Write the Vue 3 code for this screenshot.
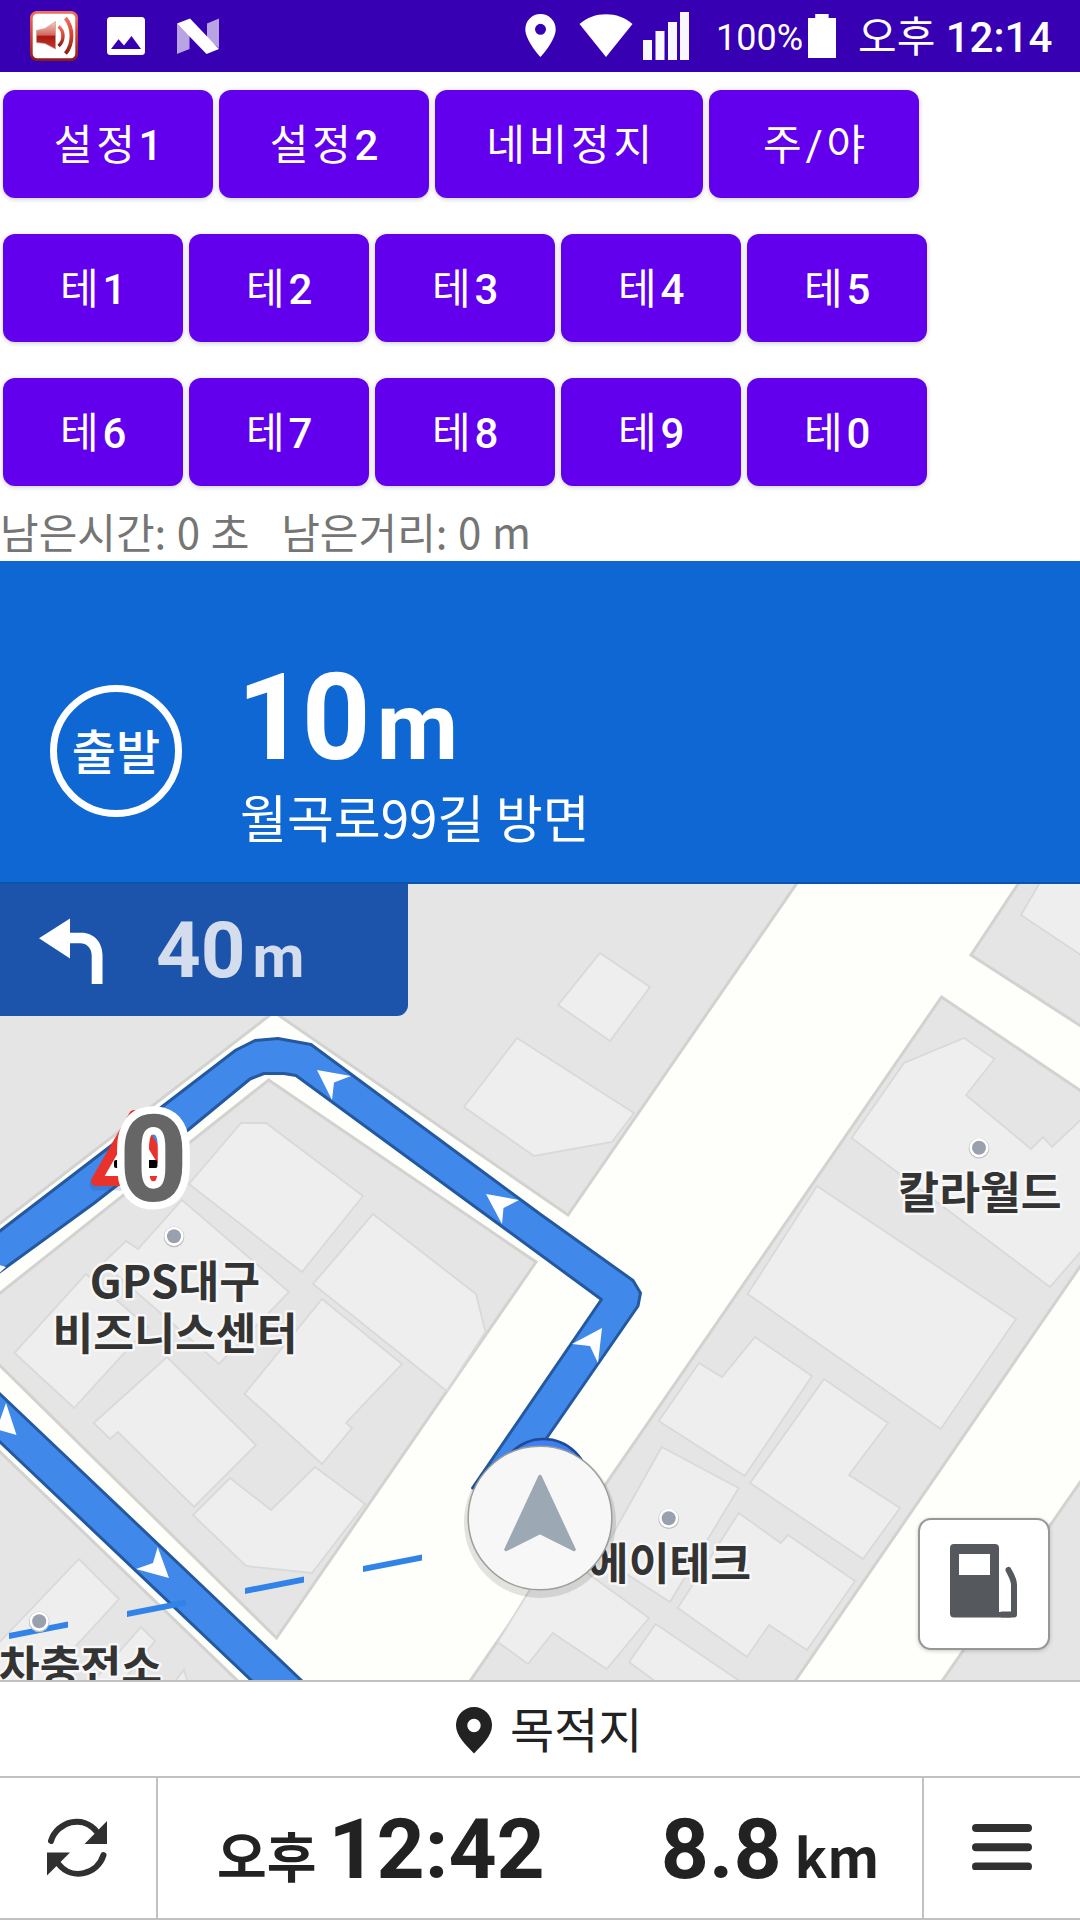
<script setup>
const rows = [
  [
    { ko: '설정', num: '1', w: 210 },
    { ko: '설정', num: '2', w: 210 },
    { ko: '네비정지', num: '', w: 268 },
    { ko: '주/야', num: '', w: 210 },
  ],
  ['1', '2', '3', '4', '5'].map((num) => ({ ko: '테', num, w: 180 })),
  ['6', '7', '8', '9', '0'].map((num) => ({ ko: '테', num, w: 180 })),
]

const remain = '남은시간: 0 초   남은거리: 0 m'

const blocks = [
  '-10,870 806,870 568,1215 274,1012 -10,1231',
  '268.6,1080 536,1262 276.5,1638 -20,1346 -20,1309',
  '-5,1447 241,1684 241,1700 -5,1700',
  '941.5,997 1090,1097 1090,1252 793,1684 468,1684',
  '1026,872 971,955 1090,1032 1090,872',
  '1090,1468 940,1684 1090,1684',
]

const buildings = [
  '600,953 650,987 610,1041 558,1005',
  '517,1038 634,1113 612,1142 534,1156 464,1107',
  '1046,872 1021,915 1090,961 1090,872',
  '964,1038 994.5,1059 966,1095 1031,1149 1043,1137 1052,1147 1090,1111 1090,1241 1050,1287 851.6,1138 904,1063',
  '817,1186 1016,1319 940.7,1429 747.6,1294',
  '699,1363 722,1377 755,1337 812,1376 744.7,1476 658.7,1421',
  '824,1379 888,1423 849,1475 900,1508 863,1559 750,1483',
  '661.7,1447 738.7,1488 670,1602 600,1557',
  '738.7,1513 780.7,1543 788,1535 855,1581 807,1650 769,1625 747,1657 677.7,1608',
  '553,1552 590,1575 649,1618 606.7,1669 552.7,1633 528,1664 497.7,1642',
  '655.7,1624 744,1684 659,1684 629,1662',
  '241,1123 266,1123 363,1196 302,1272 189,1184',
  '373,1214 476,1294 485.5,1332 446.6,1391 313,1284',
  '322,1299 402,1364 346,1423 352,1428 322,1464 244.5,1394',
  '182,1200 289,1292 219,1364 103,1263 126,1241 138,1249',
  '86,1274 148,1327 74,1408 14.5,1353',
  '167,1357 256,1445 194,1507 118,1432 110,1439 93.7,1423',
  '230,1478 271,1510 315,1467 365,1504 312,1573 246,1566 193,1515',
  '79,1559 119,1599 40,1685 -6,1685 -6,1648',
  '141,1627 155,1641 120,1685 90,1685',
  '184,1670 190,1690 168,1690',
]

const chevrons = [
  '317,1070 351,1076 334,1082.5 332,1100',
  '486,1194 519,1200 503.5,1208 502,1224',
  '602,1328 572,1344 590,1346 598,1363',
  '157.7,1547 153,1563 136,1569 169,1578',
  '6,1403 0,1420 -12,1427 16.5,1435',
  '-14,1261 6,1267 -4,1276',
]

const dashes = [
  [9, 1636],
  [127, 1614],
  [245, 1591],
  [363, 1569],
]

const pois = [
  [979, 1147.7],
  [174, 1236.3],
  [668.7, 1518.2],
  [39.2, 1621.3],
]
</script>

<template>
  <div class="screen">
    <header class="status">
      <svg class="i-speaker" width="48" height="50" viewBox="0 0 48 50">
        <defs>
          <linearGradient id="frame" x1="0" y1="0" x2="0" y2="1">
            <stop offset="0" stop-color="#f0705c" />
            <stop offset=".5" stop-color="#d2402f" />
            <stop offset="1" stop-color="#8c1d16" />
          </linearGradient>
          <linearGradient id="cone" x1="0" y1="0" x2="0" y2="1">
            <stop offset="0" stop-color="#f6cdc8" />
            <stop offset=".48" stop-color="#d5685f" />
            <stop offset=".55" stop-color="#a81812" />
            <stop offset="1" stop-color="#c8382c" />
          </linearGradient>
        </defs>
        <rect x="1.3" y="1.3" width="45.4" height="47.4" rx="6" fill="#fff" stroke="url(#frame)" stroke-width="2.8" />
        <path d="M6.5 19.5 15 17.5 25.5 10.5V38L15 32.5 6.5 31.5Z" fill="url(#cone)" stroke="#b98" stroke-width=".6" />
        <path d="M28.5 15.5C34.5 20 34.5 30 28.5 35" fill="none" stroke="url(#frame)" stroke-width="3.4" />
        <path d="M35.5 7C43.5 17 43.5 33 35.5 42.5" fill="none" stroke="url(#frame)" stroke-width="3.8" />
      </svg>
      <svg class="i-image" width="38" height="38" viewBox="0 0 38 38">
        <path fill="#fff" fill-rule="evenodd" d="M3.5 0h31A3.5 3.5 0 0 1 38 3.5v31a3.5 3.5 0 0 1-3.5 3.5h-31A3.5 3.5 0 0 1 0 34.5v-31A3.5 3.5 0 0 1 3.5 0ZM4 32h30L24.5 19 17 28.5 11.5 22.3Z" />
      </svg>
      <svg class="i-n" width="42" height="36" viewBox="0 0 42 36">
        <path fill="#b9a3e3" d="M0 5.5 12.5 18V31L0 36ZM30 5.5 42 .5V30L30 20Z" />
        <path fill="#fff" d="M0 5.5 13 .5 42 31 29.5 36Z" />
      </svg>
      <span class="grow"></span>
      <svg class="i-loc" width="31" height="43" viewBox="0 0 31 43">
        <path fill="#fff" fill-rule="evenodd" d="M15.5 0A15.2 15.2 0 0 0 .3 15.2C.3 26.5 15.5 43 15.5 43S30.7 26.5 30.7 15.2A15.2 15.2 0 0 0 15.5 0Zm0 20.8a5.5 5.5 0 1 1 0-11 5.5 5.5 0 0 1 0 11Z" />
      </svg>
      <svg class="i-wifi" width="54" height="43" viewBox="0 0 54 43">
        <path fill="#fff" d="M27 43 .5 10C8 3.5 17 .3 27 .3S46 3.5 53.5 10Z" />
      </svg>
      <svg class="i-signal" width="46" height="48" viewBox="0 0 46 48">
        <path fill="#fff" opacity=".97" d="M0 28h9v20H0zM12.5 19h9v29h-9zM25 10h9v38h-9zM37 0h9v48h-9z" />
      </svg>
      <span class="pct">100%</span>
      <svg class="i-batt" width="28" height="44" viewBox="0 0 28 44">
        <path fill="#fff" d="M7.2 0h13.4v4H28v40H0V4h7.2z" />
      </svg>
      <span class="clock">오후 <b>12:14</b></span>
    </header>

    <section class="controls">
      <div v-for="(row, r) in rows" :key="r" class="row">
        <button v-for="b in row" :key="b.ko + b.num" class="btn" :style="{ width: b.w + 'px' }">{{ b.ko }}<b v-if="b.num">{{ b.num }}</b></button>
      </div>
      <p class="remain">{{ remain }}</p>
    </section>

    <section class="guide">
      <div class="depart"><span>출발</span></div>
      <div class="guide-text">
        <div class="dist">10<span>m</span></div>
        <div class="toward">월곡로99길 방면</div>
      </div>
    </section>

    <section class="map">
      <svg class="canvas" width="1080" height="796" viewBox="0 884 1080 796">
        <rect y="884" width="1080" height="796" fill="#fefffa" />
        <polygon v-for="p in blocks" :key="p" :points="p" fill="#e5e5e5" stroke="#d2d2d0" stroke-width="3" />
        <polygon v-for="p in buildings" :key="p" :points="p" fill="#eeeeee" stroke="#d9d9d9" stroke-width="1.8" />

        <g fill="#4088ea" stroke="#24589f" stroke-width="3" stroke-linejoin="round">
          <path d="M472.5 1488 601.5 1299.5 491.7 1219 296 1075.5 284 1073.5 264 1073.5 250 1079 188 1130 93 1204 -6 1276V1235.5L0 1231 236 1050 255 1040.5 278 1038.5 311 1044.5 540 1214 633 1280.5 640.5 1293 638 1306 546 1439 530 1490Z" />
          <path d="M-6 1388 0 1394 302 1681 308 1687H258L251 1680 0 1442 -6 1436Z" />
        </g>
        <polygon v-for="p in chevrons" :key="p" :points="p" fill="#fff" />
        <path v-for="d in dashes" :key="d[0]" :d="`M${d[0]} ${d[1] - 3}l59 -11.5v6l-59 11.5z`" fill="#3183e8" />

        <g class="hump">
          <path d="M134 1116 95.5 1179.5H174Z" fill="none" stroke="#1c4a86" stroke-opacity=".18" stroke-width="12" stroke-linejoin="round" transform="translate(0 5)" />
          <path d="M134 1115 96 1181H174Z" fill="#fff" stroke="#e8322b" stroke-width="10" stroke-linejoin="round" />
          <rect x="114" y="1160" width="43.5" height="8" rx="2" fill="#000" />
          <text x="153.5" y="1201" class="zero">0</text>
        </g>

        <g v-for="p in pois" :key="p[0]">
          <circle :cx="p[0]" :cy="p[1] + .6" r="10.3" fill="#bdbdbd" />
          <circle :cx="p[0]" :cy="p[1]" r="9.6" fill="#fff" />
          <circle :cx="p[0]" :cy="p[1]" r="7" fill="#9aa1ae" />
        </g>
        <g class="poi">
          <text x="980" y="1209">칼라월드</text>
          <text x="175" y="1298">GPS대구</text>
          <text x="175" y="1350">비즈니스센터</text>
          <text x="669.5" y="1579.5">에이테크</text>
          <text x="80.5" y="1682.5">차충전소</text>
        </g>

        <circle cx="543.5" cy="1484" r="45" fill="#3f7ff2" stroke="#1f4a9c" stroke-width="2.5" />
        <circle cx="540" cy="1522" r="76" fill="#000" opacity=".11" />
        <circle cx="540" cy="1518" r="71.8" fill="#f7f7f7" stroke="#9d9d9a" stroke-width="1.5" />
        <path d="M540 1476.5 574 1549.5 540 1532.5 506 1549.5Z" fill="#9ca9b5" stroke="#9ca9b5" stroke-width="3.5" stroke-linejoin="round" />
      </svg>

      <div class="next">
        <svg width="65" height="67" viewBox="0 0 66 68">
          <path fill="#fff" d="M0 20.5 31.5 .5V15H43C56 15 64.5 25 64.5 38V67H53.5V38C53.5 30 48 25.5 42 25.5H31.5V41Z" />
        </svg>
        <div class="next-dist">40<span>m</span></div>
      </div>

      <button class="fuel">
        <svg width="68" height="74" viewBox="0 0 68 74">
          <path fill="#55585c" fill-rule="evenodd" d="M4 0H45a4 4 0 0 1 4 4V68H61V73.5H4A4 4 0 0 1 0 70V4A4 4 0 0 1 4 0ZM9 10V31H40V10Z" />
          <path d="M58.5 26C61 31 64 35 64 41V70.5H52" fill="none" stroke="#55585c" stroke-width="6" stroke-linecap="round" stroke-linejoin="round" />
        </svg>
      </button>
    </section>

    <section class="dest">
      <svg width="36" height="47" viewBox="0 0 36 47">
        <path fill="#222" fill-rule="evenodd" d="M18 0A18 18 0 0 0 0 18.5C0 29 10 38 18 46.5 26 38 36 29 36 18.5A18 18 0 0 0 18 0Zm0 25.2a6.7 6.7 0 1 1 0-13.4 6.7 6.7 0 0 1 0 13.4Z" />
      </svg>
      <span>목적지</span>
    </section>

    <footer class="bottom">
      <div class="side left">
        <svg width="60" height="60" viewBox="0 0 60 60">
          <g fill="none" stroke="#303030" stroke-width="6" stroke-linecap="round">
            <path d="M4 23C10 3.5 36 -4 50 14" />
            <path d="M56.5 37C50.5 56.5 25 63 11.5 46" />
          </g>
          <path fill="#303030" d="M60 3V26H37.5ZM0 34.5H23L0 57.5Z" />
        </svg>
      </div>
      <div class="eta">
        <span class="ampm">오후</span><span class="num time">12:42</span><span class="num km">8.8</span><span class="unit">km</span>
      </div>
      <div class="side right">
        <svg width="60" height="46" viewBox="0 0 60 46">
          <path d="M4 4H56M4 23.2H56M4 42.5H56" stroke="#303030" stroke-width="8" stroke-linecap="round" />
        </svg>
      </div>
    </footer>
  </div>
</template>

<style scoped>
.screen {
  width: 1080px;
  height: 1920px;
  display: flex;
  flex-direction: column;
  background: #fff;
  overflow: hidden;
  font-family: Roboto, "Noto Sans CJK KR", sans-serif;
}
svg { display: block; flex: none; }
button { border: 0; padding: 0; margin: 0; font: inherit; }

.status {
  height: 72px;
  flex: none;
  box-sizing: border-box;
  background: #3700b3;
  color: #fff;
  display: flex;
  align-items: flex-start;
  padding: 0 27px 0 30px;
}
.grow { flex: 1; }
.i-speaker { margin-top: 11px; }
.i-image { margin: 17px 0 0 29px; }
.i-n { margin: 18px 0 0 32px; }
.i-loc { margin: 14px 23px 0 0; }
.i-wifi { margin: 14px 10px 0 0; }
.i-signal { margin: 12px 0 0 0; }
.pct { font-size: 36px; line-height: 72px; width: 84px; margin: 2px 0 0 27px; }
.i-batt { margin: 14px 0 0 8px; }
.clock { font-size: 42px; line-height: 72px; margin: 2px 0 0 22px; white-space: nowrap; width: 195px; }
.clock b { font-weight: 500; }

.controls {
  height: 489px;
  flex: none;
  display: flex;
  flex-direction: column;
  box-sizing: border-box;
  padding-top: 18px;
}
.row { display: flex; gap: 6px; padding-left: 3px; margin-bottom: 36px; }
.btn {
  height: 108px;
  box-sizing: border-box;
  padding: 3px 0 0 4px;
  border-radius: 12px;
  background: #6200ee;
  color: #fff;
  font-size: 42px;
  line-height: 60px;
  letter-spacing: 3.75px;
  box-shadow: 0 1px 5px rgba(0, 0, 0, .22);
}
.btn b { font-weight: 500; }
.remain {
  margin: -27px 0 0;
  font-family: "Noto Sans CJK KR", sans-serif;
  font-size: 42px;
  line-height: 72px;
  height: 72px;
  color: #757575;
  white-space: pre;
  word-spacing: 1.2px;
}

.guide {
  height: 323px;
  flex: none;
  box-sizing: border-box;
  border-bottom: 2px solid #0c53aa;
  background: #0e67d2;
  color: #fff;
  display: flex;
  padding-left: 50px;
}
.depart {
  width: 132px;
  height: 132px;
  box-sizing: border-box;
  margin-top: 124px;
  border: 7px solid #fff;
  border-radius: 50%;
  display: flex;
  align-items: center;
  justify-content: center;
  font: 500 48px/60px "Noto Sans CJK KR", sans-serif;
}
.depart span { margin-top: -4px; }
.guide-text { margin-left: 58px; }
.dist {
  font-size: 120px;
  font-weight: 700;
  line-height: 120px;
  height: 120px;
  margin: 97px 0 0 -3px;
  display: flex;
  align-items: baseline;
  letter-spacing: -4px;
}
.dist span { font-size: 94px; margin-left: 10px; }
.toward {
  font: 400 51px/72px "Noto Sans CJK KR", sans-serif;
  margin-top: 2px;
}

.map { position: relative; height: 796px; flex: none; }
.canvas { position: absolute; left: 0; top: 0; }
.zero {
  font: 700 120px Roboto, sans-serif;
  text-anchor: middle;
  fill: #666;
  stroke: #fff;
  stroke-width: 15px;
  paint-order: stroke;
  stroke-linejoin: round;
}
.poi text {
  font: 700 44.4px "Noto Sans CJK KR", sans-serif;
  text-anchor: middle;
  fill: #343434;
  stroke: #f7f7f7;
  stroke-width: 5px;
  paint-order: stroke;
  stroke-linejoin: round;
}
.next {
  position: absolute;
  left: 0;
  top: 0;
  width: 408px;
  height: 132px;
  box-sizing: border-box;
  padding-left: 39px;
  background: #1d54ab;
  border-bottom-right-radius: 11px;
  display: flex;
}
.next svg { margin-top: 34px; }
.next-dist {
  margin: 1px 0 0 52px;
  font-size: 78px;
  font-weight: 700;
  line-height: 132px;
  height: 131px;
  color: #d3dded;
  display: flex;
  align-items: baseline;
}
.next-dist span { font-size: 60px; margin-left: 7px; }
.fuel {
  position: absolute;
  left: 918px;
  top: 634px;
  width: 132px;
  height: 132px;
  box-sizing: border-box;
  border: 2px solid #979797;
  border-radius: 13px;
  background: #fff;
  box-shadow: 0 1px 4px rgba(0, 0, 0, .2);
  display: flex;
  align-items: flex-start;
  padding: 24px 0 0 30px;
}

.dest {
  height: 98px;
  flex: none;
  box-sizing: border-box;
  border-top: 2px solid #c1c1c1;
  border-bottom: 2px solid #c1c1c1;
  display: flex;
  align-items: flex-start;
  padding-left: 456px;
  color: #222;
}
.dest svg { margin-top: 25px; }
.dest span { font: 400 48px/90px "Noto Sans CJK KR", sans-serif; margin-left: 18px; }

.bottom {
  height: 142px;
  flex: none;
  box-sizing: border-box;
  border-bottom: 2px solid #c1c1c1;
  display: flex;
  color: #222;
}
.side { width: 158px; box-sizing: border-box; }
.left { border-right: 2px solid #c1c1c1; padding: 40px 0 0 47px; }
.right { border-left: 2px solid #c1c1c1; padding: 46px 0 0 48px; }
.eta {
  flex: 1;
  display: flex;
  align-items: baseline;
  padding: 2px 0 0 59px;
  height: 138px;
  line-height: 140px;
  white-space: nowrap;
}
.ampm, .unit { font-family: "Noto Sans CJK KR", sans-serif; font-size: 54px; font-weight: 700; }
.num { font-size: 84px; font-weight: 700; }
.time { margin-left: 12px; }
.km { margin-left: 116px; }
.unit { margin-left: 13px; }
</style>
